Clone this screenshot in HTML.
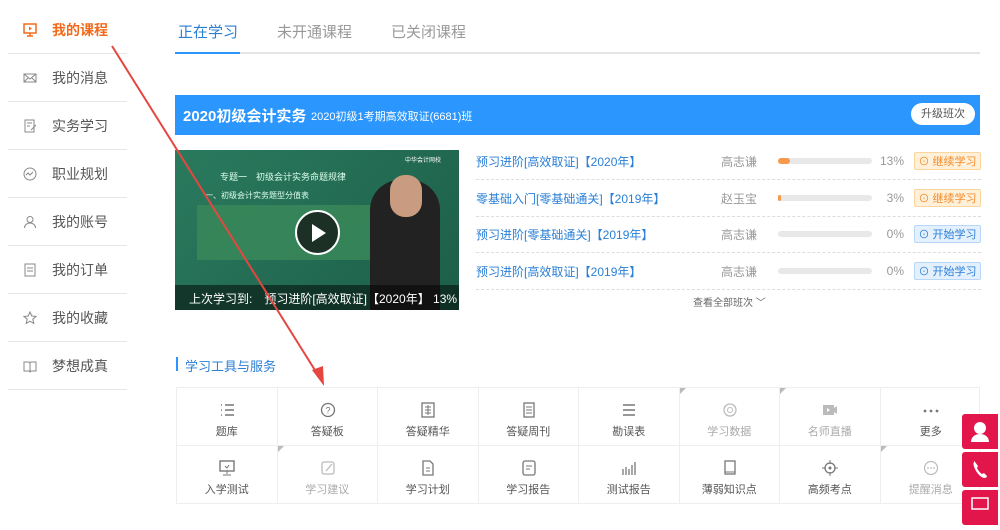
<!DOCTYPE html>
<html><head><meta charset="utf-8"><style>
*{margin:0;padding:0;box-sizing:border-box}
body{width:1000px;height:504px;overflow:hidden;background:#fff;font-family:"Liberation Sans","Noto Sans CJK SC",sans-serif;position:relative;color:#333}
.abs{position:absolute}
.side{left:8px;top:6px;width:119px}
.si{height:48px;border-bottom:1px solid #e6e6e6;display:flex;align-items:center;font-size:14px;color:#555}
.si .ic{width:14px;height:14px;margin:0 15px 0 15px;display:inline-block}
.si.act{color:#f26b1d;font-weight:bold}
.tabs{left:175px;top:18px;width:805px;height:36px;border-bottom:2px solid #e5e5e5;font-size:15px}
.tab{position:absolute;top:3px;color:#999}
.bar{left:175px;top:95px;width:805px;height:40px;background:#2a96fe;color:#fff}
.row{left:476px;width:505px;height:37px;border-bottom:1px dashed #ddd;font-size:12px;display:flex;align-items:center}
.row .n{color:#2a7fd6;width:245px}
.row .t{color:#999;width:57px}
.pb{width:94px;height:6px;border-radius:3px;background:#e8e8e8;position:relative}
.pb i{position:absolute;left:0;top:0;height:6px;border-radius:3px;background:#f79a4c}
.row .p{color:#999;width:32px;text-align:right;margin-right:10px}
.btn{width:67px;height:18px;border-radius:2px;font-size:11px;display:flex;align-items:center;justify-content:center}
.bo{background:#fff1d9;border:1px solid #fbd59c;color:#f48a2a}
.bb{background:#e4f0fd;border:1px solid #b6d7f8;color:#2a7fd6}
.grid{left:176px;top:387px;width:804px;height:117px;border:1px solid #eee}
.cell{position:absolute;width:100.5px;height:58px;border-right:1px solid #eee;border-bottom:1px solid #eee;text-align:center;font-size:11px;color:#555}
.cell svg{position:absolute;left:42px;top:14px}
.cell span{position:absolute;left:0;right:0;top:35px}
.cell.g{color:#aaa}
.cell .cn{position:absolute;left:0;top:0;width:0;height:0;border-top:6px solid #bbb;border-right:6px solid transparent}
.rb{left:962px;width:36px;height:35px;background:#e2164a;border-radius:3px 0 0 3px}
</style></head><body>

<div class="abs side">
<div class="si act"><svg class="ic" viewBox="0 0 14 14"><rect x="1" y="1" width="12" height="9" fill="none" stroke="#f26b1d" stroke-width="1.5"/><path d="M6 3.5v4l3-2z" fill="#f26b1d"/><path d="M7 10v3M4 13h6" stroke="#f26b1d" stroke-width="1.5"/></svg>我的课程</div>
<div class="si"><svg class="ic" viewBox="0 0 14 14"><rect x="1" y="3" width="12" height="8" fill="none" stroke="#888"/><path d="M1 3l6 5 6-5M1 11l4-4M13 11l-4-4" fill="none" stroke="#888"/></svg>我的消息</div>
<div class="si"><svg class="ic" viewBox="0 0 14 14"><rect x="2" y="1" width="9" height="12" fill="none" stroke="#888"/><path d="M4 4h5M4 7h3M8 11l5-5" stroke="#888"/></svg>实务学习</div>
<div class="si"><svg class="ic" viewBox="0 0 14 14"><circle cx="7" cy="7" r="6" fill="none" stroke="#888"/><path d="M3 8l2-2 2 2 3-3" fill="none" stroke="#888"/></svg>职业规划</div>
<div class="si"><svg class="ic" viewBox="0 0 14 14"><circle cx="7" cy="4.5" r="3" fill="none" stroke="#888"/><path d="M1.5 13c0-3 2.5-5 5.5-5s5.5 2 5.5 5" fill="none" stroke="#888"/></svg>我的账号</div>
<div class="si"><svg class="ic" viewBox="0 0 14 14"><rect x="2" y="1" width="10" height="12" fill="none" stroke="#888"/><path d="M4 5h6M4 8h6" stroke="#888"/></svg>我的订单</div>
<div class="si"><svg class="ic" viewBox="0 0 14 14"><path d="M7 1l1.8 4 4.2.4-3.2 2.8 1 4.2L7 10.2 3.2 12.4l1-4.2L1 5.4l4.2-.4z" fill="none" stroke="#888"/></svg>我的收藏</div>
<div class="si"><svg class="ic" viewBox="0 0 14 14"><path d="M1 3h5l1 1 1-1h5v9H8l-1 1-1-1H1z" fill="none" stroke="#888"/><path d="M7 4v9" stroke="#888"/></svg>梦想成真</div>
</div>

<div class="abs tabs">
<div class="tab" style="left:3px;color:#2a7fd6">正在学习</div>
<div class="tab" style="left:102px">未开通课程</div>
<div class="tab" style="left:216px">已关闭课程</div>
<div class="abs" style="left:0;top:34px;width:65px;height:2px;background:#2a96fe"></div>
</div>

<div class="abs bar">
<div class="abs" style="left:8px;top:10px;font-size:15px;font-weight:bold">2020初级会计实务</div>
<div class="abs" style="left:136px;top:13px;font-size:11px">2020初级1考期高效取证(6681)班</div>
<div class="abs" style="left:736px;top:8px;width:64px;height:22px;border-radius:11px;background:#fff;color:#555;font-size:11px;text-align:center;line-height:22px">升级班次</div>
</div>

<div class="abs" style="left:175px;top:150px;width:284px;height:160px;background:#1f6b55;overflow:hidden">
<div class="abs" style="left:0;top:0;width:284px;height:160px;background:linear-gradient(135deg,#2a7a5e,#1d5e49)"></div>
<div class="abs" style="left:45px;top:20px;font-size:9px;color:#dfe">专题一　初级会计实务命题规律</div>
<div class="abs" style="left:30px;top:40px;font-size:8px;color:#dfe">一、初级会计实务题型分值表</div>
<div class="abs" style="left:22px;top:55px;width:190px;height:55px;background:#3b8a5a;opacity:.8"></div>
<div class="abs" style="left:230px;top:5px;width:50px;height:12px;font-size:6px;color:#fff">中华会计网校</div>
<div class="abs" style="left:195px;top:30px;width:70px;height:130px;background:#222;border-radius:30px 30px 0 0"></div>
<div class="abs" style="left:215px;top:25px;width:32px;height:42px;background:#c99b80;border-radius:15px"></div>
<div class="abs" style="left:120px;top:60px;width:45px;height:45px;border-radius:50%;background:rgba(20,20,20,.75);border:2px solid #fff"></div>
<svg class="abs" style="left:136px;top:73px" width="16" height="20"><path d="M1 1l14 9-14 9z" fill="#fff"/></svg>
<div class="abs" style="left:0;top:135px;width:284px;height:25px;background:rgba(0,0,0,.5);color:#fff;font-size:12px;padding:5px 0 0 14px;white-space:nowrap">上次学习到:　预习进阶[高效取证]【2020年】 13%</div>
</div>

<div class="abs row" style="top:143px"><span class="n">预习进阶[高效取证]【2020年】</span><span class="t">高志谦</span><div class="pb"><i style="width:12px"></i></div><span class="p">13%</span><div class="btn bo">⊙ 继续学习</div></div>
<div class="abs row" style="top:180px"><span class="n">零基础入门[零基础通关]【2019年】</span><span class="t">赵玉宝</span><div class="pb"><i style="width:3px"></i></div><span class="p">3%</span><div class="btn bo">⊙ 继续学习</div></div>
<div class="abs row" style="top:216px"><span class="n">预习进阶[零基础通关]【2019年】</span><span class="t">高志谦</span><div class="pb"></div><span class="p">0%</span><div class="btn bb">⊙ 开始学习</div></div>
<div class="abs row" style="top:253px"><span class="n">预习进阶[高效取证]【2019年】</span><span class="t">高志谦</span><div class="pb"></div><span class="p">0%</span><div class="btn bb">⊙ 开始学习</div></div>
<div class="abs" style="left:693px;top:294px;font-size:10px;color:#666">查看全部班次 ﹀</div>

<div class="abs" style="left:176px;top:357px;width:2px;height:14px;background:#2a96fe"></div>
<div class="abs" style="left:185px;top:356px;font-size:13px;color:#2a7fd6">学习工具与服务</div>

<div class="abs grid">
<div class="cell" style="left:0;top:0"><svg width="16" height="16"><path d="M2 3h1M2 8h1M2 13h1M6 3h9M6 8h9M6 13h9" stroke="#777" stroke-width="1.5"/></svg><span>题库</span></div>
<div class="cell" style="left:100.5px;top:0"><svg width="16" height="16"><circle cx="8" cy="8" r="6.5" fill="none" stroke="#777" stroke-width="1.3"/><text x="8" y="11.5" font-size="9" text-anchor="middle" fill="#777">?</text></svg><span>答疑板</span></div>
<div class="cell" style="left:201px;top:0"><svg width="16" height="16"><rect x="2" y="1" width="12" height="14" fill="none" stroke="#777" stroke-width="1.3"/><path d="M5 5h6M5 8h6M5 11h6M8 3v10" stroke="#777"/></svg><span>答疑精华</span></div>
<div class="cell" style="left:301.5px;top:0"><svg width="16" height="16"><rect x="3" y="1" width="10" height="14" fill="none" stroke="#777" stroke-width="1.3"/><path d="M5 5h6M5 8h6M5 11h6" stroke="#777"/></svg><span>答疑周刊</span></div>
<div class="cell" style="left:402px;top:0"><svg width="16" height="16"><path d="M2 3h12M2 8h12M2 13h12" stroke="#777" stroke-width="1.4"/></svg><span>勘误表</span></div>
<div class="cell g" style="left:502.5px;top:0"><i class="cn"></i><svg width="16" height="16"><circle cx="8" cy="8" r="6" fill="none" stroke="#bbb" stroke-width="1.3"/><circle cx="8" cy="8" r="2.5" fill="none" stroke="#bbb"/></svg><span>学习数据</span></div>
<div class="cell g" style="left:603px;top:0"><i class="cn"></i><svg width="16" height="16"><rect x="1" y="3" width="11" height="10" fill="#bbb"/><path d="M12 6l3-2v8l-3-2z" fill="#bbb"/><path d="M5 6v4l3-2z" fill="#fff"/></svg><span>名师直播</span></div>
<div class="cell" style="left:703.5px;top:0;border-right:none"><svg width="16" height="16"><circle cx="2" cy="9" r="1.4" fill="#777"/><circle cx="8" cy="9" r="1.4" fill="#777"/><circle cx="14" cy="9" r="1.4" fill="#777"/></svg><span>更多</span></div>
<div class="cell" style="left:0;top:58px;border-bottom:none"><svg width="16" height="16"><rect x="1" y="1" width="14" height="10" fill="none" stroke="#777" stroke-width="1.4"/><path d="M8 11v3M4 15h8M6 6l2 2 2-3" stroke="#777" fill="none"/></svg><span>入学测试</span></div>
<div class="cell g" style="left:100.5px;top:58px;border-bottom:none"><i class="cn"></i><svg width="16" height="16"><rect x="2" y="2" width="12" height="12" rx="2" fill="none" stroke="#bbb" stroke-width="1.3"/><path d="M6 11l6-7" stroke="#bbb" stroke-width="1.3"/></svg><span>学习建议</span></div>
<div class="cell" style="left:201px;top:58px;border-bottom:none"><svg width="16" height="16"><path d="M3 1h7l3 3v11H3z" fill="none" stroke="#777" stroke-width="1.3"/><path d="M6 8h4M6 11h4" stroke="#777"/></svg><span>学习计划</span></div>
<div class="cell" style="left:301.5px;top:58px;border-bottom:none"><svg width="16" height="16"><rect x="2" y="1" width="12" height="14" rx="2" fill="none" stroke="#777" stroke-width="1.3"/><path d="M5 6h6M5 9h4" stroke="#777"/></svg><span>学习报告</span></div>
<div class="cell" style="left:402px;top:58px;border-bottom:none"><svg width="16" height="16"><path d="M2 15V9M5 15V7M8 15V9M11 15V5M14 15V2" stroke="#777" stroke-width="1.3"/></svg><span>测试报告</span></div>
<div class="cell" style="left:502.5px;top:58px;border-bottom:none"><svg width="16" height="16"><rect x="3" y="1" width="10" height="13" fill="none" stroke="#777" stroke-width="1.3"/><path d="M3 12h10" stroke="#777"/></svg><span>薄弱知识点</span></div>
<div class="cell" style="left:603px;top:58px;border-bottom:none"><svg width="16" height="16"><circle cx="8" cy="8" r="5" fill="none" stroke="#777" stroke-width="1.3"/><circle cx="8" cy="8" r="1.5" fill="#777"/><path d="M8 0v4M8 12v4M0 8h4M12 8h4" stroke="#777"/></svg><span>高频考点</span></div>
<div class="cell g" style="left:703.5px;top:58px;border:none"><i class="cn"></i><svg width="16" height="16"><circle cx="8" cy="8" r="6.5" fill="none" stroke="#bbb" stroke-width="1.2"/><circle cx="5" cy="8" r=".9" fill="#bbb"/><circle cx="8" cy="8" r=".9" fill="#bbb"/><circle cx="11" cy="8" r=".9" fill="#bbb"/></svg><span>提醒消息</span></div>
</div>

<div class="abs rb" style="top:414px"><svg width="36" height="35"><circle cx="18" cy="14" r="6" fill="#fff"/><path d="M9 28c0-5 4-8 9-8s9 3 9 8z" fill="#fff"/></svg></div>
<div class="abs rb" style="top:452px"><svg width="36" height="35"><path d="M13 9c-2 1-2 4 0 8s5 8 9 9c2 0 3-1 3-2l-3-3-2 1c-2-1-4-4-5-6l1-2-3-4z" fill="#fff"/></svg></div>
<div class="abs rb" style="top:490px"><svg width="36" height="35"><rect x="10" y="8" width="16" height="11" fill="none" stroke="#fff" stroke-width="1.5"/></svg></div>

<svg class="abs" style="left:0;top:0" width="1000" height="504"><line x1="112" y1="46" x2="318" y2="375" stroke="#e4473f" stroke-width="2"/><path d="M312 370l12 16 -1-20z" fill="#e4473f"/></svg>
</body></html>
